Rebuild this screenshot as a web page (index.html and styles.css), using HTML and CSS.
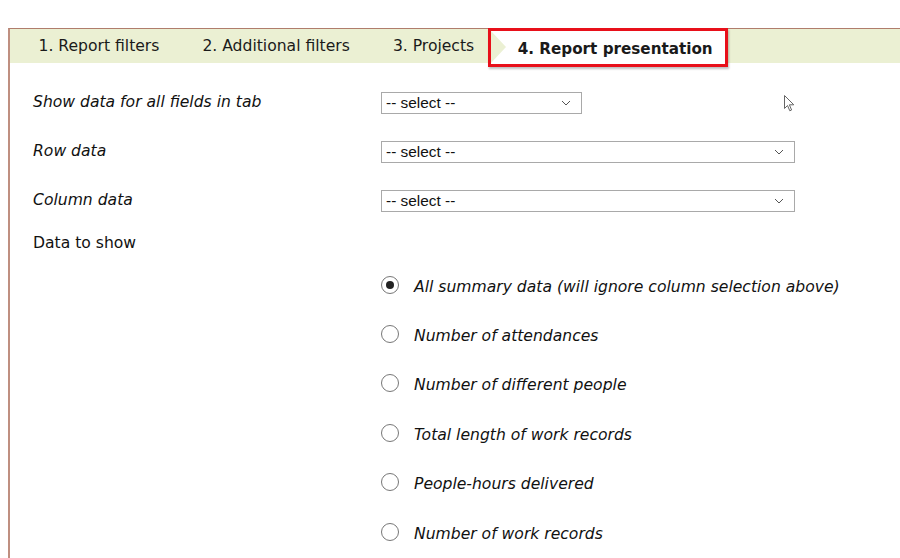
FILE: index.html
```html
<!DOCTYPE html>
<html>
<head>
<meta charset="utf-8">
<link rel="stylesheet" href="styles.css">
</head>
<body>
<div class="panel">
  <nav class="tabs">
    <span class="tab">1. Report filters</span>
    <span class="tab">2. Additional filters</span>
    <span class="tab">3. Projects</span>
    <span class="tab active"><span class="arrow"></span>4. Report presentation</span>
  </nav>
  <div class="form">
    <div class="row">
      <label class="lbl">Show data for all fields in tab</label>
      <div class="sel short"><span>-- select --</span><svg class="chev" width="10" height="6" viewBox="0 0 10 6"><path d="M1 1 L5 5 L9 1" fill="none" stroke="#555" stroke-width="1"/></svg></div>
    </div>
    <div class="row">
      <label class="lbl">Row data</label>
      <div class="sel long"><span>-- select --</span><svg class="chev" width="10" height="6" viewBox="0 0 10 6"><path d="M1 1 L5 5 L9 1" fill="none" stroke="#555" stroke-width="1"/></svg></div>
    </div>
    <div class="row">
      <label class="lbl">Column data</label>
      <div class="sel long"><span>-- select --</span><svg class="chev" width="10" height="6" viewBox="0 0 10 6"><path d="M1 1 L5 5 L9 1" fill="none" stroke="#555" stroke-width="1"/></svg></div>
    </div>
    <div class="heading">Data to show</div>
    <ul class="radios">
      <li><span class="radio checked"></span><span class="opt">All summary data (will ignore column selection above)</span></li>
      <li><span class="radio"></span><span class="opt">Number of attendances</span></li>
      <li><span class="radio"></span><span class="opt">Number of different people</span></li>
      <li><span class="radio"></span><span class="opt">Total length of work records</span></li>
      <li><span class="radio"></span><span class="opt">People-hours delivered</span></li>
      <li><span class="radio"></span><span class="opt">Number of work records</span></li>
    </ul>
  </div>
  <svg class="cursor" width="12" height="18" viewBox="0 0 12 18"><path d="M0.5 0.5 L0.5 13.5 L3.5 10.5 L5.8 15.8 L7.6 15 L5.4 9.8 L9.8 9.8 Z" fill="#fff" stroke="#666" stroke-width="1"/></svg>
</div>
</body>
</html>
```
FILE: styles.css
```css
html, body { margin: 0; padding: 0; background: #fff; overflow: hidden; }
body { padding: 28px 0 0 8px; font-family: "DejaVu Sans", Verdana, sans-serif; color: #111; }
.panel {
  position: relative;
  border-top: 1px solid #b07d6c;
  border-left: 2px solid #bf8f80;
  height: 560px;
}
.tabs {
  display: flex;
  align-items: stretch;
  height: 34px;
  background: #ebf0d3;
  padding-left: 7px;
  font-size: 15.6px;
}
.tab {
  display: flex;
  align-items: center;
  padding: 0 21.5px;
  white-space: nowrap;
  color: #1a1a1a;
}
.tab.active {
  position: relative;
  background: #fff;
  border: 3px solid #e8101a;
  margin-top: -1px;
  height: 30px;
  padding: 3px 12px 0 27px;
  margin-left: -8px;
  font-weight: bold;
  box-shadow: 1px 2px 2px rgba(0,0,0,0.25);
  font-size: 15.2px;
  box-sizing: content-box;
}
.arrow {
  position: absolute;
  left: 0;
  top: 0;
  width: 0;
  height: 0;
  border-top: 16.5px solid transparent;
  border-bottom: 16.5px solid transparent;
  border-left: 15px solid #ebf0d3;
}
.form { padding-left: 23px; padding-top: 15px; }
.row {
  display: grid;
  grid-template-columns: 348px auto;
  align-items: center;
  height: 49px;
  justify-items: start;
}
.lbl { font-style: italic; font-size: 15.6px; margin-top: -2px; }
.sel {
  display: flex;
  align-items: center;
  justify-content: space-between;
  box-sizing: border-box;
  height: 22px;
  border: 1px solid #a9a9a9;
  padding: 0 10px 0 4px;
  font-family: "Liberation Sans", Arial, sans-serif;
  font-size: 15.4px;
  background: #fff;
}
.sel.short { width: 201px; }
.sel.long { width: 414px; }
.heading { font-size: 15.6px; line-height: 18px; margin-top: 9px; }
.radios { list-style: none; margin: 0; padding: 10px 0 0 348px; }
.radios li { display: flex; align-items: center; height: 49.4px; }
.radio {
  box-sizing: border-box;
  width: 18px;
  height: 18px;
  border: 1px solid #777;
  border-radius: 50%;
  margin-right: 15px;
  position: relative;
  top: -2px;
}
.radio.checked::after {
  content: "";
  position: absolute;
  left: 4px; top: 4px;
  width: 8px; height: 8px;
  border-radius: 50%;
  background: #222;
}
.opt { font-style: italic; font-size: 15.6px; }
.cursor { position: absolute; left: 774px; top: 66px; }
```
